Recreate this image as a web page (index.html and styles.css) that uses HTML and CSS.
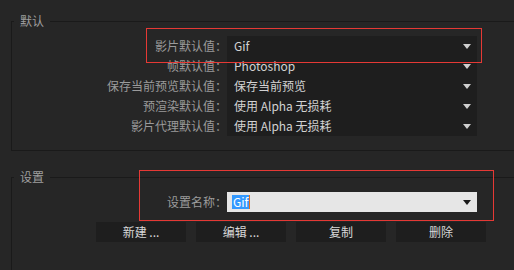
FILE: index.html
```html
<!DOCTYPE html>
<html>
<head>
    <meta charset="UTF-8">
    <title>默认设置</title>
    <link rel="stylesheet" href="styles.css">
</head>
<body>
    <div class="panel">
        <fieldset class="group defaults">
            <legend>默认</legend>
            <div class="form-row">
                <label>影片默认值：</label>
                <div class="select"><span>Gif</span><i class="arrow"></i></div>
            </div>
            <div class="form-row">
                <label>帧默认值：</label>
                <div class="select"><span>Photoshop</span><i class="arrow"></i></div>
            </div>
            <div class="form-row">
                <label>保存当前预览默认值：</label>
                <div class="select"><span>保存当前预览</span><i class="arrow"></i></div>
            </div>
            <div class="form-row">
                <label>预渲染默认值：</label>
                <div class="select"><span>使用 Alpha 无损耗</span><i class="arrow"></i></div>
            </div>
            <div class="form-row">
                <label>影片代理默认值：</label>
                <div class="select"><span>使用 Alpha 无损耗</span><i class="arrow"></i></div>
            </div>
        </fieldset>

        <fieldset class="group settings">
            <legend>设置</legend>
            <div class="form-row">
                <label>设置名称：</label>
                <div class="select light"><span class="selected">Gif</span><i class="arrow"></i></div>
            </div>
            <div class="button-group">
                <button>新建 ...</button>
                <button>编辑 ...</button>
                <button>复制</button>
                <button>删除</button>
            </div>
        </fieldset>
    </div>

    <div class="mark mark-1"></div>
    <div class="mark mark-2"></div>
</body>
</html>
```

FILE: styles.css
```css
html, body {
    margin: 0;
    padding: 0;
}

body {
    width: 514px;
    height: 270px;
    overflow: hidden;
    position: relative;
    background: #262626;
    font-family: "Noto Sans CJK SC", "Noto Sans", sans-serif;
    font-size: 12px;
    color: #d2d2d2;
}

.panel {
    padding: 14px 0 0 11px;
}

.group {
    margin: 0;
    padding: 8px 0 14px 0;
    border: 1px solid #1a1a1a;
    border-right: 0;
    min-width: 0;
}

.group legend {
    margin-left: 2px;
    padding: 0 6px;
    line-height: 14px;
    color: #9e9e9e;
}

.settings {
    margin-top: 19px;
    padding-bottom: 40px;
}

.form-row {
    display: flex;
    height: 20px;
}

.form-row label {
    width: 215px;
    text-align: right;
    line-height: 20px;
    color: #9b9b9b;
}

.select {
    width: 250px;
    box-sizing: border-box;
    padding: 0 6px 0 7px;
    display: flex;
    align-items: center;
    justify-content: space-between;
    background: #1e1e1e;
    line-height: 20px;
}

.arrow {
    width: 0;
    height: 0;
    border-left: 4px solid transparent;
    border-right: 4px solid transparent;
    border-top: 5px solid #cfcfcf;
}

.select.light {
    background: #e6e6e6;
    padding-left: 5px;
}

.select.light .arrow {
    border-top-color: #1a1a1a;
}

.selected {
    background: #3399ff;
    color: #fff;
    line-height: 14px;
    padding: 0 1px;
    border-right: 1px solid #e07020;
}

.button-group {
    display: flex;
    gap: 10px;
    margin: 10px 0 0 84px;
}

button {
    width: 90px;
    height: 20px;
    padding: 0;
    border: none;
    background: #1e1e1e;
    color: #d8d8d8;
    font-family: inherit;
    font-size: 12px;
    line-height: 20px;
}

.mark {
    position: absolute;
    border: 1px solid #e53935;
    box-sizing: border-box;
}

.mark-1 {
    left: 146px;
    top: 28px;
    width: 336px;
    height: 35px;
}

.mark-2 {
    left: 139px;
    top: 170px;
    width: 355px;
    height: 51px;
}
```
